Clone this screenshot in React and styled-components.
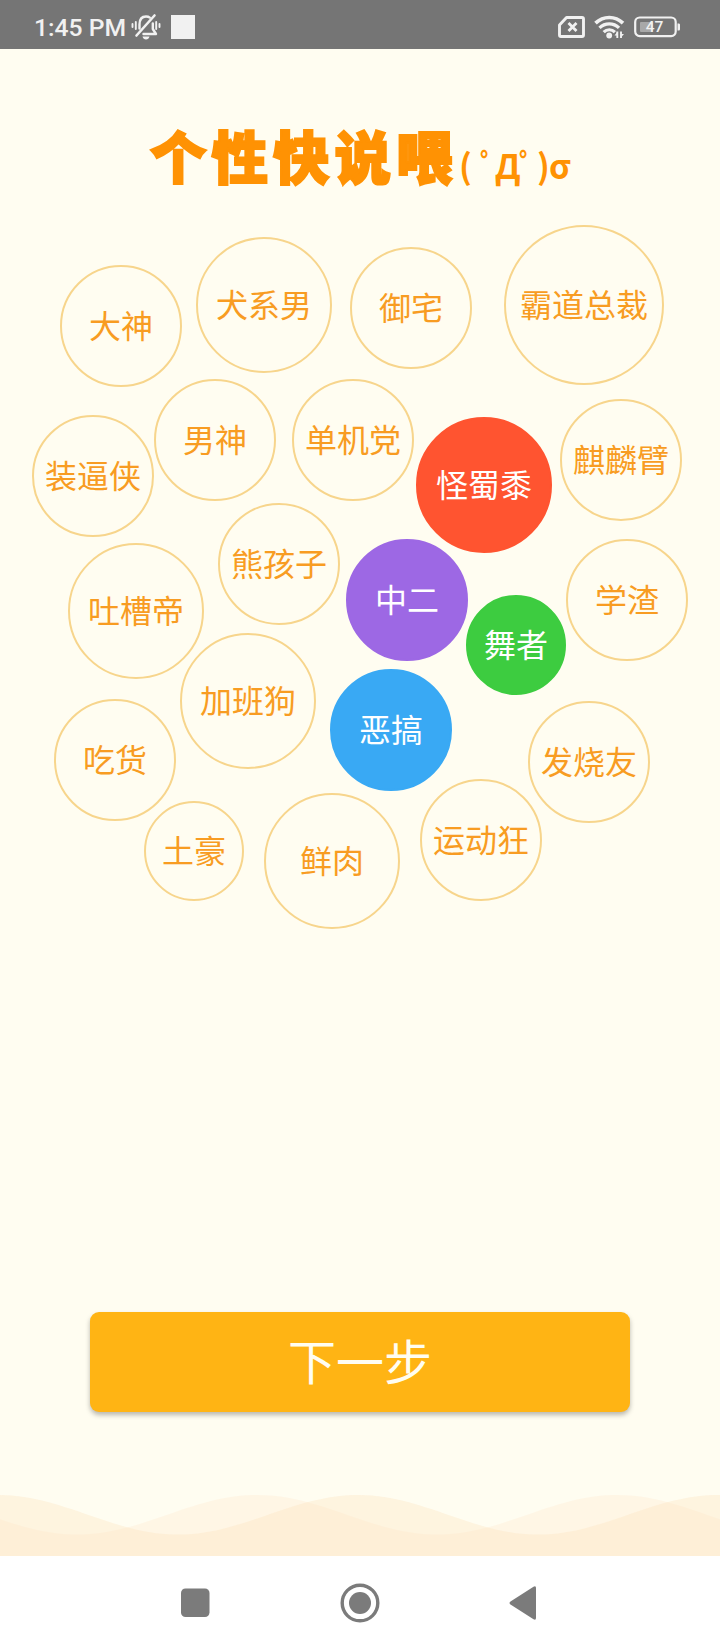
import React, { useState } from "react";
import styled, { createGlobalStyle } from "styled-components";

const GlobalStyle = createGlobalStyle`
  * {
    box-sizing: border-box;
  }
  body {
    margin: 0;
    background: #fffdf1;
  }
`;

const Screen = styled.div`
  width: 720px;
  height: 1650px;
  display: flex;
  flex-direction: column;
  background: #fffdf1;
  overflow: hidden;
  font-family: "Noto Sans CJK SC", "Noto Sans", sans-serif;
`;

const StatusBar = styled.header`
  height: 49px;
  padding: 5px 39px 0 34px;
  display: flex;
  align-items: center;
  justify-content: space-between;
  background: #757575;
  color: #f1f1f1;
`;
const StatusGroup = styled.div`
  display: flex;
  align-items: center;
  gap: ${(props) => props.$gap}px;
`;
const Clock = styled.span`
  width: 92px;
  padding-top: 2px;
  font-family: Roboto, sans-serif;
  font-size: 24.7px;
  font-weight: 500;
  line-height: 30px;
  white-space: nowrap;
`;
const Notification = styled.span`
  width: 24px;
  height: 24px;
  margin: -1px 0 0 5px;
  background: #f1f1f1;
`;

const Title = styled.h1`
  height: 161px;
  margin: 0;
  padding: 62px 0 0 150px;
  display: flex;
  align-items: flex-start;
  color: #ff9203;
  white-space: pre;
`;
const TitleText = styled.span`
  width: 309px;
  font-size: 56.5px;
  font-weight: 900;
  line-height: 86px;
  letter-spacing: 5px;
  -webkit-text-stroke: 2px #ff9203;
`;
const Kaomoji = styled.span`
  display: flex;
  padding-top: 29px;
  font-size: 34px;
  font-weight: 700;
  line-height: 50px;
`;
const Mark = styled.span`
  width: ${(props) => props.$width}px;
`;

const BubbleField = styled.section`
  position: relative;
  height: 730px;
`;
const Bubble = styled.button`
  position: absolute;
  left: ${(props) => props.$x}px;
  top: ${(props) => props.$y}px;
  width: ${(props) => props.$size}px;
  height: ${(props) => props.$size}px;
  padding: 0 0 4px;
  display: flex;
  align-items: center;
  justify-content: center;
  border: 2px solid ${(props) => (props.$active ? props.$color : "#f7d58c")};
  border-radius: 50%;
  background: ${(props) => (props.$active ? props.$color : "transparent")};
  color: ${(props) => (props.$active ? "#ffffff" : "#f89c22")};
  font-family: inherit;
  font-size: 32px;
  line-height: 46px;
  white-space: nowrap;
  cursor: pointer;
`;

const Actions = styled.div`
  flex: 1;
  padding: 372px 90px 0;
`;
const NextButton = styled.button`
  width: 100%;
  height: 100px;
  padding: 0 0 6px;
  border: 0;
  border-radius: 9px;
  background: #ffb414;
  box-shadow: 0 3px 5px rgba(0, 0, 0, 0.28);
  color: #fffdf1;
  font-family: inherit;
  font-size: 48px;
  line-height: 94px;
  cursor: pointer;
`;

const Waves = styled.svg`
  display: block;
  height: 62px;
`;

const NavBar = styled.nav`
  height: 94px;
  display: flex;
  align-items: center;
  justify-content: center;
  gap: 125px;
  background: #ffffff;
`;
const NavIcon = styled.svg`
  width: 40px;
  height: 40px;
  fill: #7b7b7b;
`;

const tags = [
  { label: "大神", x: 60, y: 55, size: 122 },
  { label: "犬系男", x: 196, y: 27, size: 136 },
  { label: "御宅", x: 350, y: 37, size: 122 },
  { label: "霸道总裁", x: 504, y: 15, size: 160 },
  { label: "装逼侠", x: 32, y: 205, size: 122 },
  { label: "男神", x: 154, y: 169, size: 122 },
  { label: "单机党", x: 292, y: 169, size: 122 },
  { label: "怪蜀黍", x: 416, y: 207, size: 136, color: "#ff5430" },
  { label: "麒麟臂", x: 560, y: 189, size: 122 },
  { label: "熊孩子", x: 218, y: 293, size: 122 },
  { label: "吐槽帝", x: 68, y: 333, size: 136 },
  { label: "中二", x: 346, y: 329, size: 122, color: "#9d68e4" },
  { label: "舞者", x: 466, y: 385, size: 100, color: "#3dcc40" },
  { label: "学渣", x: 566, y: 329, size: 122 },
  { label: "加班狗", x: 180, y: 423, size: 136 },
  { label: "恶搞", x: 330, y: 459, size: 122, color: "#39a9f4" },
  { label: "吃货", x: 54, y: 489, size: 122 },
  { label: "发烧友", x: 528, y: 491, size: 122 },
  { label: "土豪", x: 144, y: 591, size: 100 },
  { label: "鲜肉", x: 264, y: 583, size: 136 },
  { label: "运动狂", x: 420, y: 569, size: 122 },
];

const wavePath = (peak) => {
  let d = "M0 62";
  for (let x = 0; x <= 720; x += 6) {
    const y = 20.8 - 19.8 * Math.cos(((x - peak) * Math.PI) / 180);
    d += ` L${x} ${y.toFixed(2)}`;
  }
  return `${d} L720 62 Z`;
};

const MutedBell = () => (
  <svg width="30" height="28" viewBox="0 0 30 28" fill="none" stroke="#f1f1f1" strokeWidth="2.4" strokeLinecap="round">
    <path d="M8.5 15.5v-4c0-4.8 2.3-8 6.5-8 1.600 0 2.800.3 3.800 1.100" />
    <path d="M21.800 10.500V16l3.200 5H12.500" strokeLinejoin="round" />
    <path d="m23.500 2.500-18 20" strokeWidth="2.6" />
    <path d="M1.500 11v3M4.800 9v7M25.200 9v7M28.500 11v3" strokeWidth="1.9" />
    <path d="M11.500 23.500h7c-.5 2-1.800 3-3.500 3s-3-1-3.500-3z" fill="#f1f1f1" stroke="none" />
  </svg>
);

const NoSim = () => (
  <svg width="27" height="22" viewBox="0 0 27 22" fill="none" stroke="#f1f1f1">
    <path d="M8.5 1.500H24c1 0 1.500.5 1.500 1.500v16c0 1-.5 1.500-1.500 1.500H3c-1 0-1.500-.5-1.500-1.500V9z" strokeWidth="2.9" strokeLinejoin="round" />
    <path d="m10.500 7 8 8m0-8-8 8" strokeWidth="2.8" />
  </svg>
);

const Wifi = () => (
  <svg width="31" height="24" viewBox="0 0 31 24" fill="none" stroke="#f1f1f1">
    <path d="M1.500 8.200c8-7.600 19.500-7.600 27.500 0" strokeWidth="3.7" />
    <path d="M5.500 12.900c5.500-5.300 14-5.300 19.500 0" strokeWidth="3.3" />
    <path d="M9.700 17.200c3.200-3.300 8-3.300 11.200 0" strokeWidth="3.2" />
    <circle cx="15.2" cy="20.5" r="2.9" fill="#f1f1f1" stroke="none" />
    <path d="M23.300 16.500V23m3.700-6.500V23" strokeWidth="1.9" />
    <path d="m20.500 20.500 2.800-3.500v3.500zM30 19h-3v3.500z" fill="#f1f1f1" stroke="none" />
  </svg>
);

const Battery = () => (
  <svg width="47" height="22" viewBox="0 0 47 22">
    <rect x="6" y="6" width="13" height="10" rx="1" fill="#a8a8a8" />
    <rect x="1.2" y="1.5" width="40.5" height="18.6" rx="4.5" fill="none" stroke="#f1f1f1" strokeWidth="2.2" />
    <path d="M43.500 7.500h1c1 0 1.500.5 1.500 1.500v4c0 1-.5 1.500-1.500 1.500h-1z" fill="#f1f1f1" />
    <text x="20.5" y="16.3" textAnchor="middle" fill="#f1f1f1" fontFamily="Roboto, sans-serif" fontSize="15.5" fontWeight="500">
      47
    </text>
  </svg>
);

const App = () => {
  const [selected, setSelected] = useState(["怪蜀黍", "中二", "舞者", "恶搞"]);

  const toggle = (label) => {
    setSelected((prev) =>
      prev.includes(label) ? prev.filter((item) => item !== label) : [...prev, label]
    );
  };

  return (
    <Screen>
      <GlobalStyle />
      <StatusBar>
        <StatusGroup $gap={5}>
          <Clock>1:45 PM</Clock>
          <MutedBell />
          <Notification />
        </StatusGroup>
        <StatusGroup $gap={9}>
          <NoSim />
          <Wifi />
          <Battery />
        </StatusGroup>
      </StatusBar>
      <Title>
        <TitleText>个性快说喂</TitleText>
        <Kaomoji>
          <Mark $width={21}>(</Mark>
          <Mark $width={15}>ﾟ</Mark>
          <Mark $width={24}>Д</Mark>
          <Mark $width={18}>ﾟ</Mark>
          <Mark $width={12}>)</Mark>
          <Mark $width={20}>σ</Mark>
        </Kaomoji>
      </Title>
      <BubbleField>
        {tags.map((tag) => (
          <Bubble
            key={tag.label}
            $x={tag.x}
            $y={tag.y}
            $size={tag.size}
            $color={tag.color || "#ffb414"}
            $active={selected.includes(tag.label)}
            onClick={() => toggle(tag.label)}
          >
            {tag.label}
          </Bubble>
        ))}
      </BubbleField>
      <Actions>
        <NextButton>下一步</NextButton>
      </Actions>
      <Waves width="720" height="62" viewBox="0 0 720 62">
        <path d={wavePath(257)} fill="#ffeeD6" fillOpacity="0.45" />
        <path d={wavePath(-2)} fill="#fde4c0" fillOpacity="0.36" />
      </Waves>
      <NavBar>
        <NavIcon viewBox="0 0 40 40">
          <rect x="6" y="5.5" width="28.5" height="28.5" rx="4.5" />
        </NavIcon>
        <NavIcon viewBox="0 0 40 40">
          <circle cx="20" cy="20" r="17.8" fill="none" stroke="#7b7b7b" strokeWidth="3.4" />
          <circle cx="20" cy="20" r="11" />
        </NavIcon>
        <NavIcon viewBox="0 0 40 40">
          <path d="M5.500 18.500 28.500 3.800q2.500-1.300 2.500 1.200v30q0 2.500-2.500 1.200L5.500 21.500q-2-1.500 0-3z" />
        </NavIcon>
      </NavBar>
    </Screen>
  );
};

export default App;
